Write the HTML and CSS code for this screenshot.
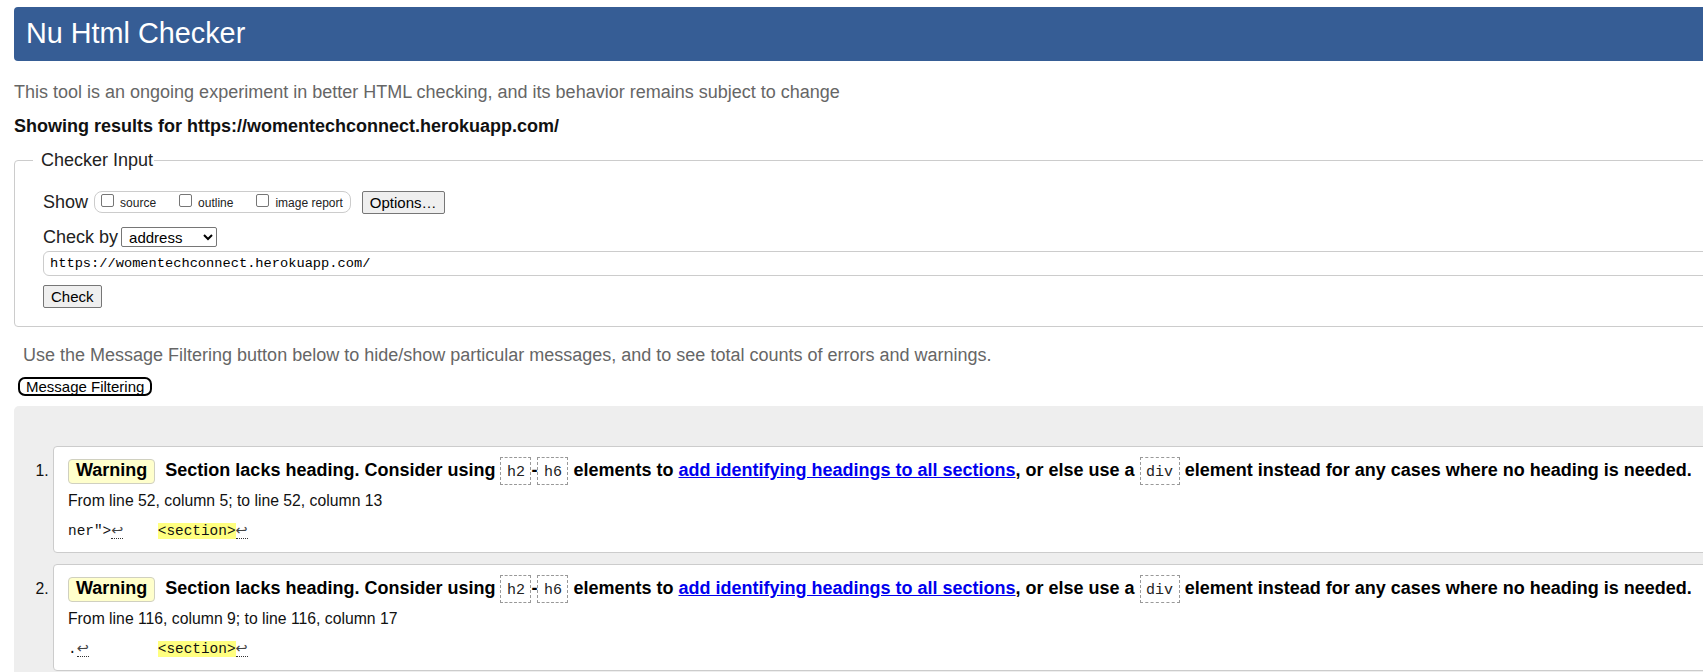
FILE: index.html
```html
<!DOCTYPE html>
<html lang="en">
<head>
<meta charset="utf-8">
<title>Nu Html Checker</title>
<link rel="stylesheet" href="styles.css">
</head>
<body>
<div class="page">
  <h1 class="title">Nu Html Checker</h1>
  <p class="intro">This tool is an ongoing experiment in better HTML checking, and its behavior remains subject to change</p>
  <p class="showing">Showing results for https://womentechconnect.herokuapp.com/</p>
  <form class="form">
    <fieldset class="checker">
      <legend class="legend">Checker Input</legend>
      <div class="inner">
        <div class="row row-show">
          <span class="lbl">Show</span>
          <span class="opts">
            <label class="opt"><input class="cb" type="checkbox">source</label>
            <label class="opt"><input class="cb" type="checkbox">outline</label>
            <label class="opt"><input class="cb" type="checkbox">image report</label>
          </span>
          <button class="btn btn-options" type="button">Options…</button>
        </div>
        <div class="row row-by">
          <span class="lbl">Check by</span>
          <select class="sel"><option>address</option></select>
        </div>
        <input class="url" type="text" value="https://womentechconnect.herokuapp.com/">
        <div class="row row-check">
          <button class="btn" type="button">Check</button>
        </div>
      </div>
    </fieldset>
  </form>
  <p class="note">Use the Message Filtering button below to hide/show particular messages, and to see total counts of errors and warnings.</p>
  <button class="filter-btn" type="button">Message Filtering</button>
  <div class="results">
    <ol class="list">
      <li class="msg">
        <p class="line"><strong class="badge">Warning</strong> <span>Section lacks heading. Consider using <code class="kw">h2</code>-<code class="kw">h6</code> elements to <a class="link" href="#">add identifying headings to all sections</a>, or else use a <code class="kw">div</code> element instead for any cases where no heading is needed.</span></p>
        <p class="loc">From line 52, column 5; to line 52, column 13</p>
        <p class="extract"><code class="ex">ner"&gt;<span class="lf">↩</span>    <mark class="hl">&lt;section&gt;</mark><span class="lf">↩</span></code></p>
      </li>
      <li class="msg">
        <p class="line"><strong class="badge">Warning</strong> <span>Section lacks heading. Consider using <code class="kw">h2</code>-<code class="kw">h6</code> elements to <a class="link" href="#">add identifying headings to all sections</a>, or else use a <code class="kw">div</code> element instead for any cases where no heading is needed.</span></p>
        <p class="loc">From line 116, column 9; to line 116, column 17</p>
        <p class="extract"><code class="ex">.<span class="lf">↩</span>        <mark class="hl">&lt;section&gt;</mark><span class="lf">↩</span></code></p>
      </li>
    </ol>
  </div>
</div>
</body>
</html>
```

FILE: styles.css
```css
html, body {
  margin: 0;
  padding: 0;
  overflow: hidden;
  background: #fff;
}

body {
  font-family: "Liberation Sans", Arial, sans-serif;
  font-size: 18px;
  color: #000;
}

.page {
  width: 1790px;
  padding-left: 14px;
}

.title {
  margin: 7px 0 0;
  padding: 10px 12px 11px;
  line-height: 33px;
  font-size: 28.8px;
  font-weight: normal;
  color: #fff;
  background: #365d95;
  border-radius: 4px;
}

.intro {
  margin: 21px 0 0;
  line-height: 21px;
  color: #666;
}

.showing {
  margin: 13px 0 0;
  line-height: 21px;
  font-weight: bold;
  color: #111;
}

.form {
  margin: 0;
}

.checker {
  margin: 13px 0 0;
  padding: 19px 18px 18px;
  border: 1px solid #ccc;
  border-radius: 4px;
  min-width: 0;
}

.legend {
  padding: 0 1px 0 8px;
  line-height: 21px;
  font-size: 18px;
  color: #222;
}

.inner {
  padding-left: 10px;
}

.row {
  display: flex;
  align-items: center;
}

.row-show {
  height: 24px;
}

.row-by {
  height: 22px;
  margin-top: 12px;
  gap: 3px;
}

.row-check {
  margin-top: 9px;
}

.lbl {
  line-height: 21px;
  color: #222;
}

.opts {
  display: inline-flex;
  align-items: center;
  height: 22px;
  box-sizing: border-box;
  border: 1px solid #ccc;
  border-radius: 8px;
  padding: 0 7px 0 6px;
  margin-left: 6px;
  gap: 23px;
  font-size: 12px;
}

.opt {
  display: inline-block;
  line-height: 14px;
  color: #222;
}

.cb {
  -webkit-appearance: none;
  appearance: none;
  width: 13px;
  height: 13px;
  margin: 0 6px 0 0;
  box-sizing: border-box;
  border: 1px solid #767676;
  border-radius: 2px;
  background: #fff;
  vertical-align: baseline;
}

.btn {
  height: 23px;
  box-sizing: border-box;
  padding: 0 7px;
  font-family: "Liberation Sans", Arial, sans-serif;
  font-size: 15px;
  color: #000;
  background: #efefef;
  border: 1px solid #767676;
  border-radius: 2px;
}

.btn-options {
  margin-left: 11px;
}

.sel {
  width: 96px;
  height: 20px;
  box-sizing: border-box;
  padding: 0 0 0 3px;
  font-family: "Liberation Sans", Arial, sans-serif;
  font-size: 15px;
  color: #000;
  background: #fff;
  border: 1px solid #767676;
  border-radius: 2px;
}

.url {
  display: block;
  width: 100%;
  height: 25px;
  box-sizing: border-box;
  margin-top: 3px;
  padding: 0 6px;
  font-family: "Liberation Mono", monospace;
  font-size: 13.7px;
  color: #000;
  border: 1px solid #ccc;
  border-radius: 6px;
  background: #fff;
}

.note {
  margin: 18px 0 0;
  padding-left: 9px;
  line-height: 21px;
  color: #666;
}

.filter-btn {
  display: block;
  margin: 11px 0 0 4px;
  height: 19px;
  box-sizing: border-box;
  padding: 0 6px;
  font-family: "Liberation Sans", Arial, sans-serif;
  font-size: 15px;
  line-height: 15px;
  color: #000;
  background: #fff;
  border: 2px solid #000;
  border-radius: 7px;
}

.results {
  margin-top: 10px;
  background: #eee;
  border-radius: 5px 0 0 0;
  padding: 40px 0 20px;
}

.list {
  margin: 0;
  padding: 0 0 0 39px;
}

.msg {
  margin: 0 0 11px;
  padding: 9px 14px 10px;
  background: #fff;
  border: 1px solid #ccc;
  border-radius: 4px;
  font-size: 15.75px;
  color: #111;
}

.line {
  margin: 0;
  line-height: 28px;
  font-size: 18px;
  font-weight: bold;
  white-space: nowrap;
  color: #000;
}

.badge {
  display: inline-block;
  margin-right: 5px;
  padding: 0 7px 1.5px;
  line-height: 21px;
  background: #ffc;
  border: 1px solid #d0d0c0;
  border-radius: 4px;
}

.kw {
  display: inline-block;
  padding: 6px 5.5px 3px;
  line-height: 17px;
  font-family: "Liberation Mono", monospace;
  font-size: 15px;
  font-weight: normal;
  color: #222;
  border: 1px dashed #999;
}

.link {
  color: #00e;
  text-decoration: underline;
}

.loc {
  margin: 5px 0 0;
  line-height: 21px;
}

.extract {
  margin: 8px 0 0;
  line-height: 21px;
  white-space: pre;
}

.ex {
  font-family: "Liberation Mono", monospace;
  font-size: 14.4px;
  color: #111;
}

.hl {
  background: #ffff80;
  color: inherit;
}

.lf {
  font-family: "DejaVu Sans", sans-serif;
  color: #444;
  border-bottom: 1px dotted #333;
}
```
